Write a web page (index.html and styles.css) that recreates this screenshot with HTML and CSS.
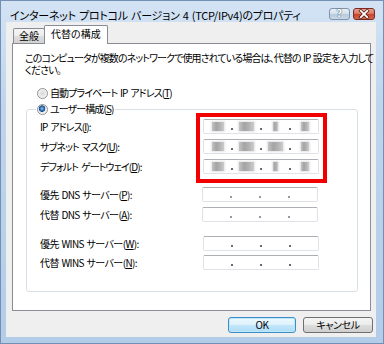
FILE: index.html
```html
<!DOCTYPE html>
<html lang="ja">
<head>
<meta charset="utf-8">
<link rel="stylesheet" href="styles.css">
</head>
<body>
<div class="window">
  <div class="titlebar">
    <span class="title">インターネット プロトコル バージョン 4 (TCP/IPv4)のプロパティ</span>
    <div class="caption-buttons">
      <span class="cbtn help"><span class="q">?</span></span>
      <span class="cbtn close">
        <svg width="22" height="12" viewBox="0 0 22 12"><path d="M7.5 2.5 L14.5 9.5 M14.5 2.5 L7.5 9.5" stroke="#5a1a10" stroke-width="3.6" stroke-linecap="square"/><path d="M7.5 2.5 L14.5 9.5 M14.5 2.5 L7.5 9.5" stroke="#fff" stroke-width="2" stroke-linecap="square"/></svg>
      </span>
    </div>
  </div>
  <div class="client">
    <div class="tabs">
      <span class="tab">全般</span>
      <span class="tab active">代替の構成</span>
    </div>
    <div class="panel">
      <p class="desc">このコンピュータが複数のネットワークで使用されている場合は、代替の IP 設定を入力して<br>ください。</p>
      <div class="radio-row"><span class="rb"></span><span class="kana">自動プライベート IP アドレス(<u>T</u>)</span></div>
      <fieldset class="group">
        <legend class="legend"><span class="legend-in"><span class="rb checked"></span><span class="kana">ユーザー構成(<u>S</u>)</span></span></legend>
        <div class="ip-section">
          <div class="labels">
            <span class="lbl kana">IP アドレス(<u>I</u>):</span>
            <span class="lbl kana">サブネット マスク(<u>U</u>):</span>
            <span class="lbl kana">デフォルト ゲートウェイ(<u>D</u>):</span>
          </div>
          <div class="redbox">
            <div class="field"><span class="seg"><i class="blk w12"></i></span><b class="dot"></b><span class="seg"><i class="blk w15"></i></span><b class="dot"></b><span class="seg"><i class="blk w5"></i></span><b class="dot"></b><span class="seg"><i class="blk w8"></i></span></div>
            <div class="field"><span class="seg"><i class="blk w12"></i></span><b class="dot"></b><span class="seg"><i class="blk w15"></i></span><b class="dot"></b><span class="seg"><i class="blk w15"></i></span><b class="dot"></b><span class="seg"><i class="blk w8"></i></span></div>
            <div class="field"><span class="seg"><i class="blk w12"></i></span><b class="dot"></b><span class="seg"><i class="blk w15"></i></span><b class="dot"></b><span class="seg"><i class="blk w5"></i></span><b class="dot"></b><span class="seg"><i class="blk w8"></i></span></div>
          </div>
        </div>
        <div class="row dns first"><span class="lbl srv">優先 DNS サーバー(<u>P</u>):</span><div class="field"><span class="seg"></span><b class="dot light"></b><span class="seg"></span><b class="dot light"></b><span class="seg"></span><b class="dot light"></b><span class="seg"></span></div></div>
        <div class="row dns"><span class="lbl srv">代替 DNS サーバー(<u>A</u>):</span><div class="field"><span class="seg"></span><b class="dot light"></b><span class="seg"></span><b class="dot light"></b><span class="seg"></span><b class="dot light"></b><span class="seg"></span></div></div>
        <div class="row wins first"><span class="lbl srv">優先 WINS サーバー(<u>W</u>):</span><div class="field"><span class="seg"></span><b class="dot"></b><span class="seg"></span><b class="dot"></b><span class="seg"></span><b class="dot"></b><span class="seg"></span></div></div>
        <div class="row wins"><span class="lbl srv">代替 WINS サーバー(<u>N</u>):</span><div class="field"><span class="seg"></span><b class="dot"></b><span class="seg"></span><b class="dot"></b><span class="seg"></span><b class="dot"></b><span class="seg"></span></div></div>
      </fieldset>
    </div>
    <div class="buttons">
      <button class="btn default">OK</button>
      <button class="btn cancel">キャンセル</button>
    </div>
  </div>
</div>
</body>
</html>
```
FILE: styles.css
```css
* { box-sizing: border-box; }
html, body { margin: 0; padding: 0; }
body {
  width: 384px;
  height: 344px;
  overflow: hidden;
  font-family: "Noto Sans CJK JP", "Noto Sans", sans-serif;
  font-size: 10px;
  font-feature-settings: "palt";
  color: #000;
}
u { text-decoration: underline; text-underline-offset: 1px; }

.window {
  width: 384px;
  height: 344px;
  display: flex;
  flex-direction: column;
  padding: 0 7px 6px 5px;
  border: 1px solid #7390b4;
  background: linear-gradient(180deg, #d3e3f4 0%, #bfd5ec 30%, #b3cce8 100%);
}

.titlebar {
  height: 21px;
  flex: none;
  display: flex;
  align-items: flex-start;
  padding-top: 7px;
}
.title {
  margin-left: 4px;
  font-size: 11px;
  line-height: 14px;
  letter-spacing: -0.25px;
  word-spacing: 1px;
  color: #000;
  white-space: nowrap;
}
.caption-buttons {
  margin-left: auto;
  margin-right: 1px;
  display: flex;
  gap: 3px;
}
.cbtn {
  height: 12px;
  border-radius: 3px;
  display: flex;
  align-items: center;
  justify-content: center;
}
.help {
  width: 21px;
  border: 1px solid #7f93ab;
  background: linear-gradient(180deg, #e9f0f8 0%, #d3dfec 50%, #b7c9dd 51%, #c9d8e8 100%);
}
.help .q {
  font-family: "DejaVu Sans", sans-serif;
  font-weight: bold;
  font-size: 10px;
  line-height: 10px;
  color: #fff;
  text-shadow: 0 0 1px #3d4f66, 0 0 1px #3d4f66;
}
.close {
  width: 22px;
  border: 1px solid #7a2a1e;
  background: linear-gradient(180deg, #e8a393 0%, #d7725f 50%, #c3432c 51%, #d4654d 100%);
  overflow: hidden;
}
.close svg { display: block; }

.client {
  flex: 1;
  display: flex;
  flex-direction: column;
  padding-top: 3px;
  background: #efefef;
}

.tabs {
  height: 18px;
  flex: none;
  display: flex;
  align-items: flex-end;
  margin-left: 7px;
}
.tab {
  height: 15px;
  padding: 0 5px;
  line-height: 13px;
  border: 1px solid #898c95;
  border-bottom: none;
  border-radius: 2px 2px 0 0;
  background: linear-gradient(180deg, #f4f4f4 0%, #ececec 50%, #dedede 51%, #d2d2d2 100%);
  white-space: nowrap;
}
.tab.active {
  height: 19px;
  margin-left: -1px;
  margin-bottom: -1px;
  padding: 0 6px;
  line-height: 16px;
  background: #fff;
  position: relative;
  z-index: 1;
}

.panel {
  height: 268px;
  flex: none;
  margin: 0 5px 0 6px;
  padding: 8px 12px 0 12px;
  background: #fff;
  border: 1px solid #898c95;
}
.desc {
  margin: 0;
  line-height: 12px;
  letter-spacing: -0.9px;
  word-spacing: 1px;
  white-space: nowrap;
}
.kana { letter-spacing: -0.9px; word-spacing: 1.5px; }
.srv { letter-spacing: -0.6px; word-spacing: 1px; }
.radio-row {
  margin-top: 11px;
  padding-left: 12px;
  height: 12px;
  line-height: 12px;
  display: flex;
  align-items: center;
  gap: 2px;
}
.rb {
  width: 11px;
  height: 11px;
  flex: none;
  border-radius: 50%;
  border: 1px solid #8f9396;
  background: radial-gradient(circle at 50% 50%, #d6d6d6 0, #eaeaea 3px, #f6f6f6 5px);
}
.rb.checked {
  background: radial-gradient(circle at 45% 40%, #9ac7ee 0, #2f6fb4 2px, #1b4b8a 3px, #e4e4e4 3.5px, #f6f6f6 5px);
}

.group {
  margin: 4px 0 0 1px;
  padding: 0 0 21px 0;
  border: 1px solid #d5dfe5;
  border-radius: 3px;
  min-width: 0;
}
.legend {
  margin-left: 9px;
  padding: 0 1px;
  line-height: 12px;
}
.legend-in {
  display: flex;
  align-items: center;
  gap: 2px;
  height: 12px;
}

.ip-section {
  display: flex;
  margin-top: -2px;
  padding-left: 13px;
}
.labels {
  width: 156px;
  flex: none;
  display: flex;
  flex-direction: column;
  gap: 5px;
  padding-top: 6px;
}
.lbl {
  height: 15px;
  line-height: 15px;
  white-space: nowrap;
}
.redbox {
  border: 4px solid #f20000;
  padding: 2px 4px 5px 3px;
  display: flex;
  flex-direction: column;
  gap: 5px;
}

.field {
  width: 116px;
  height: 15px;
  flex: none;
  display: flex;
  align-items: center;
  background: #fff;
  border: 1px solid #dfe3e8;
  border-top-color: #acaeb4;
  border-radius: 2px;
}
.seg {
  flex: 1;
  height: 100%;
  display: flex;
  align-items: center;
  justify-content: center;
}
.dot {
  width: 2px;
  height: 2px;
  flex: none;
  align-self: flex-end;
  margin-bottom: 3px;
  background: #6a6a6a;
}
.dot.light { background: #9a9a9a; }
.blk {
  display: block;
  height: 9px;
  background: linear-gradient(90deg, #c4c4c4 0%, #a4a4a4 35%, #b2b2b2 65%, #cdcdcd 100%);
  box-shadow: 0 0 2px 1px #e3e3e3;
}
.w5 { width: 5px; }
.w8 { width: 8px; }
.w12 { width: 12px; }
.w15 { width: 15px; }

.row {
  display: flex;
  align-items: center;
  height: 15px;
  margin-top: 5px;
  padding-left: 13px;
}
.row .lbl { width: 156px; flex: none; }
.row.dns.first { margin-top: 4px; }
.row.dns .field { margin-left: 6px; }
.row.wins .field { margin-left: 7px; }
.row.wins.first { margin-top: 14px; }
.row.wins:not(.first) { margin-top: 4px; }

.buttons {
  flex: none;
  display: flex;
  justify-content: flex-end;
  gap: 7px;
  margin: 6px 3px 0 0;
}
.btn {
  height: 16px;
  padding: 0;
  font-family: inherit;
  font-size: 10px;
  font-feature-settings: "palt";
  line-height: 14px;
  letter-spacing: -0.4px;
  color: #000;
  border-radius: 3px;
}
.btn.default {
  width: 68px;
  border: 1px solid #3c8fc6;
  background: linear-gradient(180deg, #eef8fd 0%, #dcf1fc 50%, #c2e7fb 51%, #aedcf5 100%);
  box-shadow: inset 0 0 0 1px #bfe6fb;
}
.btn.cancel {
  width: 70px;
  border: 1px solid #707070;
  background: linear-gradient(180deg, #f4f4f4 0%, #ebebeb 50%, #dddddd 51%, #cfcfcf 100%);
}
```
